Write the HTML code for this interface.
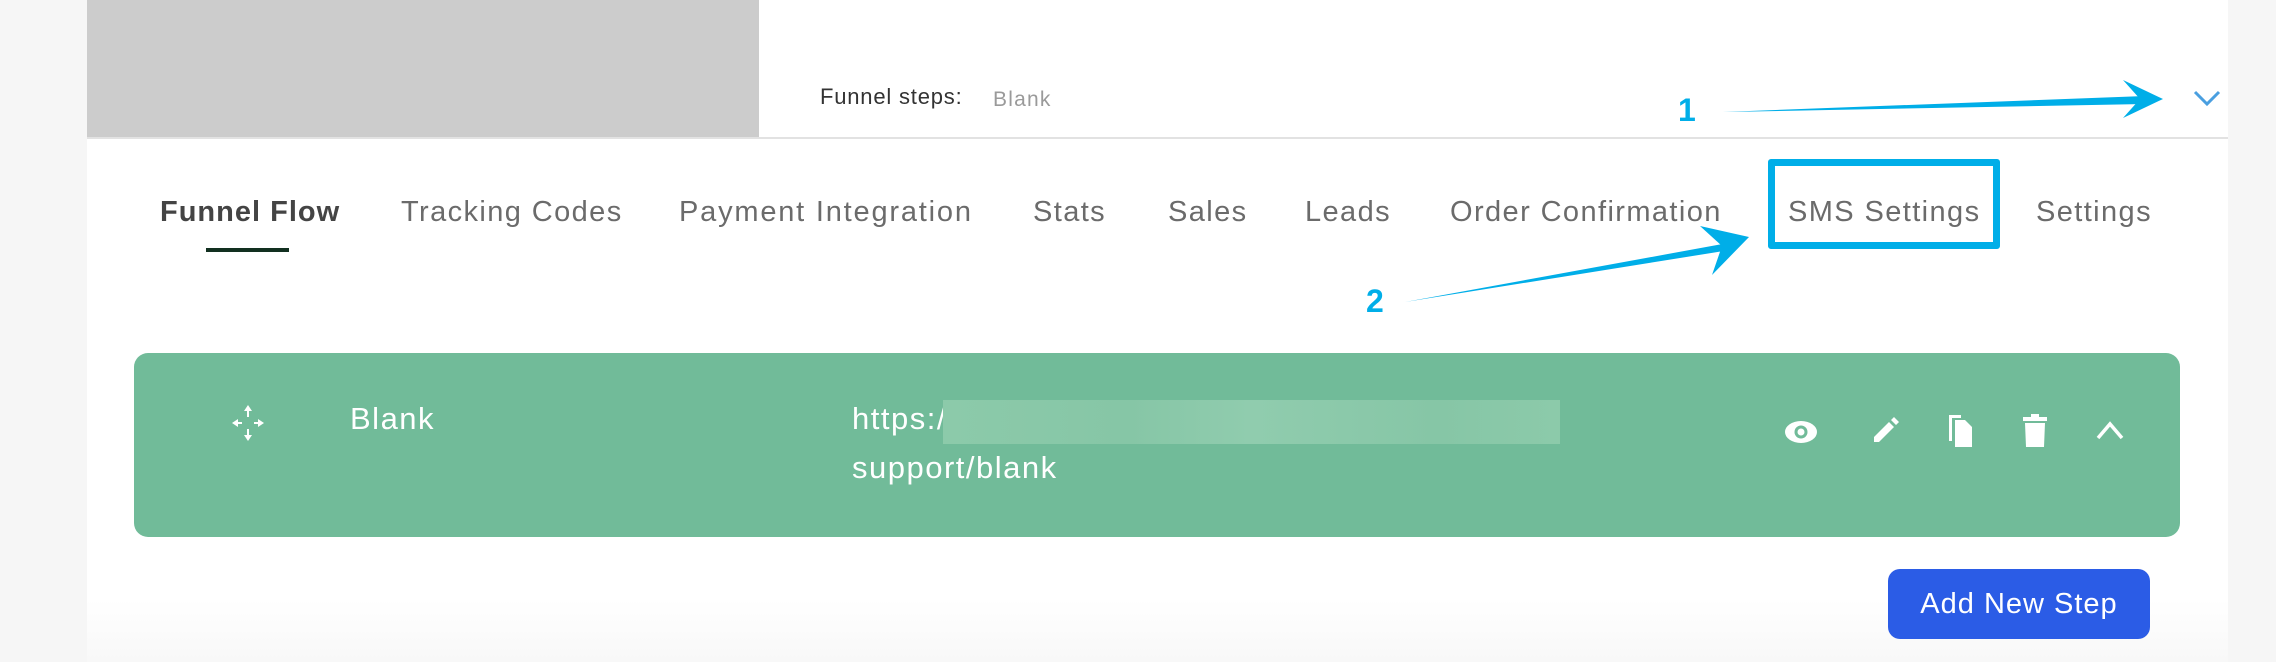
<!DOCTYPE html>
<html><head><meta charset="utf-8"><style>
*{margin:0;padding:0;box-sizing:border-box}
body{width:2276px;height:662px;background:#f6f6f6;font-family:"Liberation Sans",sans-serif;position:relative;overflow:hidden}
.card{position:absolute;left:87px;top:0;width:2141px;height:662px;background:linear-gradient(#fff 0,#fff 600px,#f8f8f8 662px)}
.abs{position:absolute;white-space:nowrap}
.tab{position:absolute;top:196px;font-size:29px;color:#6b6b6b;letter-spacing:1.4px}
</style></head><body>
<div class="card"></div>
<div class="abs" style="left:87px;top:0;width:672px;height:138px;background:#cccccc"></div>
<div class="abs" style="left:87px;top:137px;width:2141px;height:2px;background:#e2e2e2"></div>
<div class="abs" style="left:820px;top:84px;font-size:22px;color:#333;letter-spacing:0.8px">Funnel steps:</div>
<div class="abs" style="left:993px;top:88px;font-size:21px;color:#9a9a9a;letter-spacing:1.2px">Blank</div>
<svg class="abs" style="left:2192px;top:88px" width="30" height="20"><path d="M3 4 L15 16 L27 4" fill="none" stroke="#4a9fe0" stroke-width="3"/></svg>

<div class="tab" style="left:160px;color:#444;font-weight:bold;letter-spacing:1px">Funnel Flow</div>
<div class="abs" style="left:206px;top:248px;width:83px;height:4px;background:#123020"></div>
<div class="tab" style="left:401px">Tracking Codes</div>
<div class="tab" style="left:679px;letter-spacing:1.8px">Payment Integration</div>
<div class="tab" style="left:1033px">Stats</div>
<div class="tab" style="left:1168px">Sales</div>
<div class="tab" style="left:1305px">Leads</div>
<div class="tab" style="left:1450px">Order Confirmation</div>
<div class="tab" style="left:1788px">SMS Settings</div>
<div class="tab" style="left:2036px">Settings</div>
<div class="abs" style="left:1768px;top:159px;width:232px;height:90px;border:7px solid #00aee8;border-radius:3px"></div>

<svg class="abs" style="left:0;top:0" width="2276" height="662">
<path d="M1723 112 L2145 96 L2145 104 Z" fill="#00aee8"/>
<path d="M2123 80 L2163 99 L2123 118 L2140 99 Z" fill="#00aee8"/>
<path d="M1405 302 L1728 243 L1730 250 Z" fill="#00aee8"/>
<path d="M1700 226 L1749 237 L1712 275 L1722 246 Z" fill="#00aee8"/>
</svg>
<div class="abs" style="left:1678px;top:92px;font-size:32px;font-weight:bold;color:#00aee8">1</div>
<div class="abs" style="left:1366px;top:283px;font-size:32px;font-weight:bold;color:#00aee8">2</div>

<div class="abs" style="left:134px;top:353px;width:2046px;height:184px;background:#71bb99;border-radius:14px"></div>
<svg class="abs" style="left:230px;top:403px" width="36" height="40" fill="#fff" stroke="#fff" stroke-width="2">
<path d="M18 2 L14 8 H22 Z M18 38 L14 32 H22 Z M2 20 L8 16 V24 Z M34 20 L28 16 V24 Z" stroke="none"/>
<path d="M18 8 V14 M18 26 V32 M8 20 H12 M24 20 H28"/></svg>
<div class="abs" style="left:350px;top:401px;font-size:31px;color:#fff;letter-spacing:1.5px">Blank</div>
<div class="abs" style="left:852px;top:401px;font-size:31px;color:#fff;letter-spacing:1.5px">https:/</div>
<div class="abs" style="left:943px;top:400px;width:617px;height:44px;background:linear-gradient(90deg,#8ccaaa,#86c6a6 30%,#90ccae 50%,#86c6a6 80%,#8ccaaa)"></div>
<div class="abs" style="left:852px;top:450px;font-size:31px;color:#fff;letter-spacing:1.5px">support/blank</div>

<svg class="abs" style="left:1783px;top:418px" width="36" height="28"><ellipse cx="18" cy="14" rx="16" ry="11" fill="#fff"/><circle cx="18" cy="14" r="6.5" fill="#71bb99"/><circle cx="18" cy="14" r="3.5" fill="#fff"/></svg>
<svg class="abs" style="left:1870px;top:416px" width="30" height="30"><path d="M4 26 L4 21 L19 6 L24 11 L9 26 Z M21 4 L24 1 L29 6 L26 9 Z" fill="#fff"/></svg>
<svg class="abs" style="left:1945px;top:413px" width="30" height="36"><path d="M4 2 H16 V5 H7 V28 H4 Z" fill="#fff"/><path d="M10 7 H20 L27 14 V34 H10 Z" fill="#fff"/></svg>
<svg class="abs" style="left:2021px;top:413px" width="28" height="36"><rect x="2" y="4" width="24" height="4" fill="#fff"/><rect x="10" y="1" width="8" height="4" fill="#fff"/><path d="M4 10 H24 L23 34 H5 Z" fill="#fff"/></svg>
<svg class="abs" style="left:2095px;top:418px" width="30" height="24"><path d="M3 20 L15 6 L27 20" fill="none" stroke="#fff" stroke-width="3.5"/></svg>

<div class="abs" style="left:1888px;top:569px;width:262px;height:70px;background:#2b5ce6;border-radius:12px;color:#fff;font-size:29px;letter-spacing:1px;text-align:center;line-height:70px">Add New Step</div>
</body></html>
